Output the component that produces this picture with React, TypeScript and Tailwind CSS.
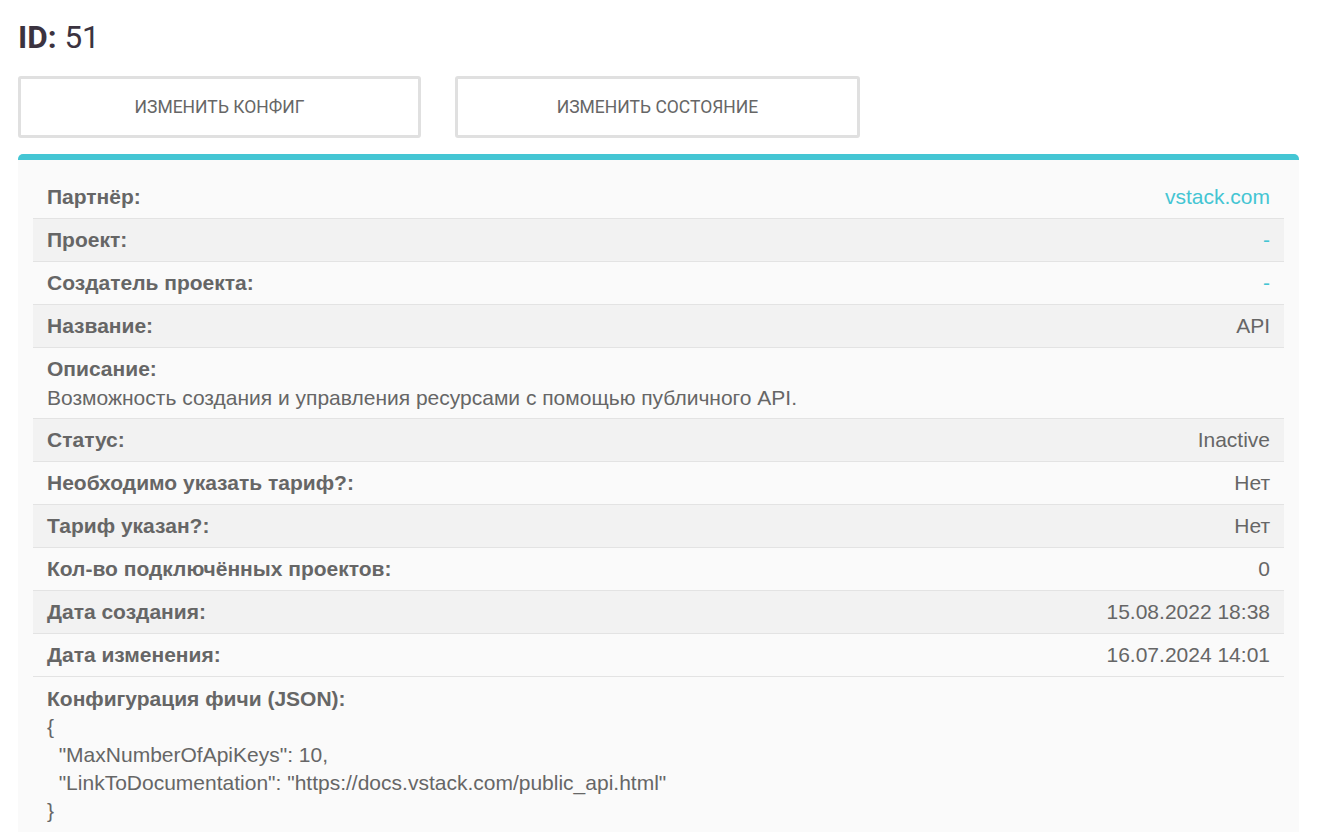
import React from "react";

type Row = {
  label: string;
  value: string;
  link?: boolean;
};

const ROWS_TOP: Row[] = [
  { label: "Партнёр:", value: "vstack.com", link: true },
  { label: "Проект:", value: "-", link: true },
  { label: "Создатель проекта:", value: "-", link: true },
  { label: "Название:", value: "API" },
];

const ROWS_BOTTOM: Row[] = [
  { label: "Статус:", value: "Inactive" },
  { label: "Необходимо указать тариф?:", value: "Нет" },
  { label: "Тариф указан?:", value: "Нет" },
  { label: "Кол-во подключённых проектов:", value: "0" },
  { label: "Дата создания:", value: "15.08.2022 18:38" },
  { label: "Дата изменения:", value: "16.07.2024 14:01" },
];

function InfoRow({ row, shaded }: { row: Row; shaded: boolean }) {
  return (
    <div
      className={`flex items-center justify-between border-b border-[#e3e3e3] px-[14px] py-[10px] leading-[22px] ${
        shaded ? "bg-[#f2f2f2]" : ""
      }`}
    >
      <span className="font-bold text-[#666]">{row.label}</span>
      <span className={row.link ? "text-[#44c5d3]" : "text-[#666]"}>{row.value}</span>
    </div>
  );
}

export default function App() {
  return (
    <div className="min-h-screen bg-white px-[18px] pt-[20px] text-[21px] font-[family-name:Liberation_Sans,Arial,sans-serif]">
      <h1 className="font-[family-name:Roboto,sans-serif] text-[31.5px] leading-[36px] text-[#3b3340]">
        <span className="font-bold">ID:</span> 51
      </h1>

      <div className="mt-[20px] flex gap-[34px] font-[family-name:Roboto,sans-serif]">
        <button className="h-[62px] w-[403px] rounded-[3px] border-[3px] border-[#e0e0e0] bg-white text-[17.5px] uppercase text-[#666]">
          Изменить конфиг
        </button>
        <button className="h-[62px] w-[405px] rounded-[3px] border-[3px] border-[#e0e0e0] bg-white text-[17.5px] uppercase text-[#666]">
          Изменить состояние
        </button>
      </div>

      <div className="mt-[16px] mr-[3px] rounded-t-[5px] border-t-[6px] border-[#44c6d4] bg-[#fafafa] px-[15px] pt-[16px] pb-[20px]">
        {ROWS_TOP.map((row, i) => (
          <InfoRow key={row.label} row={row} shaded={i % 2 === 1} />
        ))}

        <div className="border-b border-[#e3e3e3] px-[14px] pt-[10px] pb-[9px] leading-[22px] text-[#666]">
          <div className="font-bold">Описание:</div>
          <div className="mt-[7px]">Возможность создания и управления ресурсами с помощью публичного API.</div>
        </div>

        {ROWS_BOTTOM.map((row, i) => (
          <InfoRow key={row.label} row={row} shaded={i % 2 === 0} />
        ))}

        <div className="px-[14px] pt-[8px] leading-[28px] text-[#666]">
          <div className="font-bold">Конфигурация фичи (JSON):</div>
          <pre className="font-[family-name:Liberation_Sans,Arial,sans-serif] leading-[28px]">
{`{
  "MaxNumberOfApiKeys": 10,
  "LinkToDocumentation": "https://docs.vstack.com/public_api.html"
}`}
          </pre>
        </div>
      </div>
    </div>
  );
}
